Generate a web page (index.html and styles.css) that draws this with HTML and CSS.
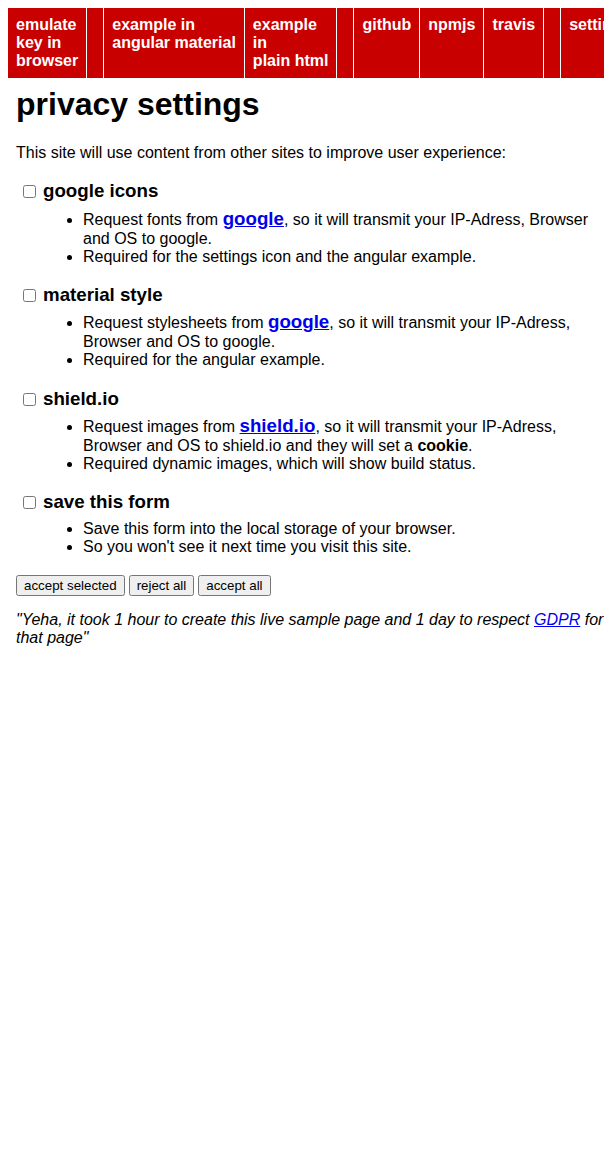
FILE: index.html
```html
<!DOCTYPE html>
<html lang="en">
<head>
<meta charset="utf-8">
<title>privacy settings</title>
<link rel="stylesheet" href="styles.css">
</head>
<body>
<div class="frame">
<nav class="nav">
  <a class="nav-item" href="#">emulate<br>key in<br>browser</a>
  <span class="nav-item"></span>
  <a class="nav-item" href="#">example in<br>angular material</a>
  <a class="nav-item" href="#">example<br>in<br>plain html</a>
  <span class="nav-item"></span>
  <a class="nav-item" href="#">github</a>
  <a class="nav-item" href="#">npmjs</a>
  <a class="nav-item" href="#">travis</a>
  <span class="nav-item"></span>
  <a class="nav-item" href="#">settings</a>
</nav>
<main class="page">
  <h1 class="title">privacy settings</h1>
  <p class="intro">This site will use content from other sites to improve user experience:</p>

  <section class="option">
    <input class="check" type="checkbox" id="opt-icons">
    <div class="option-body">
      <h3 class="option-title"><label for="opt-icons">google icons</label></h3>
      <ul class="details">
        <li>Request fonts from <a class="big-link" href="#">google</a>, so it will transmit your IP-Adress, Browser and OS to google.</li>
        <li>Required for the settings icon and the angular example.</li>
      </ul>
    </div>
  </section>

  <section class="option">
    <input class="check" type="checkbox" id="opt-style">
    <div class="option-body">
      <h3 class="option-title"><label for="opt-style">material style</label></h3>
      <ul class="details">
        <li>Request stylesheets from <a class="big-link" href="#">google</a>, so it will transmit your IP-Adress, Browser and OS to google.</li>
        <li>Required for the angular example.</li>
      </ul>
    </div>
  </section>

  <section class="option">
    <input class="check" type="checkbox" id="opt-shield">
    <div class="option-body">
      <h3 class="option-title"><label for="opt-shield">shield.io</label></h3>
      <ul class="details">
        <li>Request images from <a class="big-link" href="#">shield.io</a>, so it will transmit your IP-Adress, Browser and OS to shield.io and they will set a <b>cookie</b>.</li>
        <li>Required dynamic images, which will show build status.</li>
      </ul>
    </div>
  </section>

  <section class="option">
    <input class="check" type="checkbox" id="opt-save">
    <div class="option-body">
      <h3 class="option-title"><label for="opt-save">save this form</label></h3>
      <ul class="details details-plain">
        <li>Save this form into the local storage of your browser.</li>
        <li>So you won't see it next time you visit this site.</li>
      </ul>
    </div>
  </section>

  <div class="actions">
    <button class="btn" type="button">accept selected</button>
    <button class="btn" type="button">reject all</button>
    <button class="btn" type="button">accept all</button>
  </div>

  <p class="quote">"Yeha, it took 1 hour to create this live sample page and 1 day to respect <a href="#">GDPR</a> for that page"</p>
</main>
</div>
</body>
</html>
```

FILE: styles.css
```css
body {
  margin: 0;
  font-family: "Liberation Sans", Arial, sans-serif;
  font-size: 16px;
  color: #000;
  background: #fff;
}

.frame {
  overflow: hidden;
  padding: 8px 0 8px 8px;
}

.nav {
  display: flex;
  gap: 1px;
  width: 680px;
}

.nav-item {
  flex: 0 0 auto;
  display: block;
  padding: 8px;
  background: #c80000;
  color: #fff;
  font-weight: bold;
  font-size: 16px;
  line-height: 18px;
  text-decoration: none;
  white-space: nowrap;
}

.page {
  width: 600px;
  padding-left: 8px;
}

.title {
  margin: 8px 0 21px;
  font-size: 32px;
  font-weight: bold;
}

.intro {
  margin: 16px 0;
}

.option {
  display: flex;
  align-items: flex-start;
  padding-left: 7px;
  margin-top: 18.2px;
}

.check {
  flex: 0 0 auto;
  width: 13px;
  height: 13px;
  margin: 5px 7px 0 0;
}

.option-body {
  flex: 1 1 auto;
}

.option-title {
  margin: 0;
  font-size: 18.72px;
  font-weight: bold;
}

.details {
  margin: 5.5px 0 0;
  padding-left: 40px;
}

.details-plain {
  margin-top: 6.5px;
}

.big-link {
  font-size: 18.72px;
  font-weight: bold;
  color: #0000ee;
}

.actions {
  display: flex;
  gap: 4px;
  margin-top: 19px;
}

.btn {
  font-family: "Liberation Sans", Arial, sans-serif;
  font-size: 13.333px;
  min-height: 21px;
}

.quote {
  margin: 15px 0 0;
  font-style: italic;
}

.quote a {
  color: #0000ee;
}
```
